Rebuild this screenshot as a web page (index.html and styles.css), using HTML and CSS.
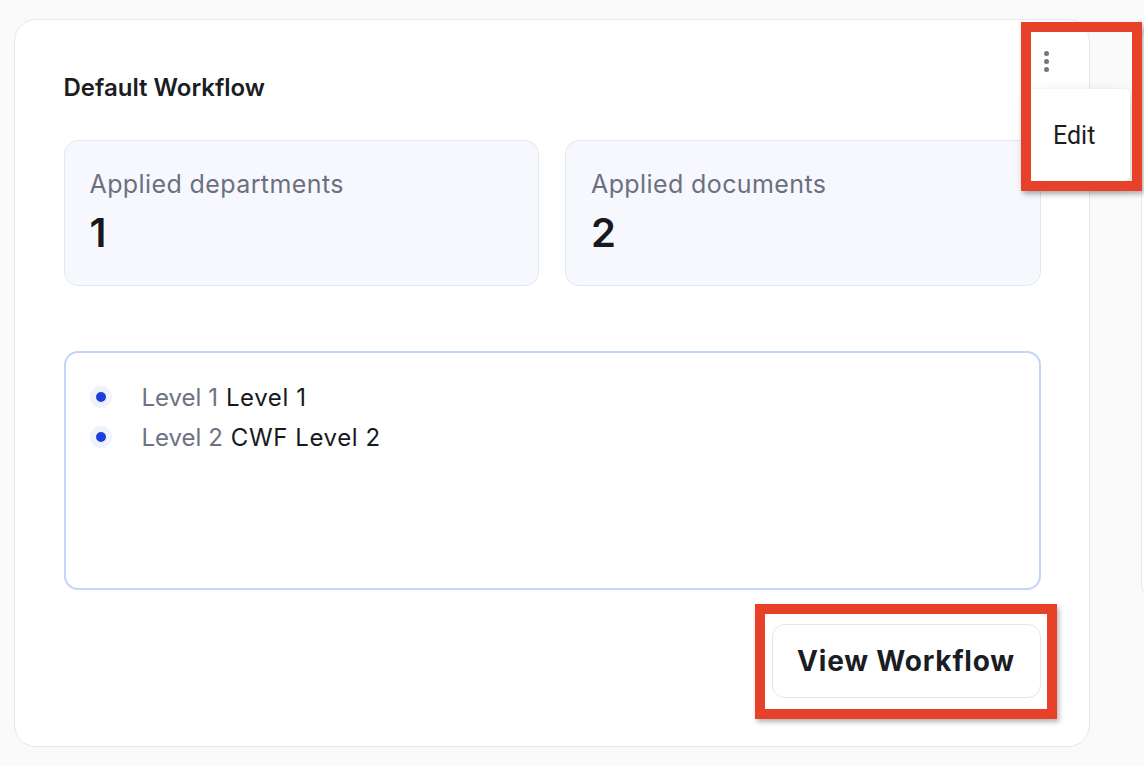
FILE: index.html
```html
<!DOCTYPE html>
<html lang="en">
<head>
    <meta charset="UTF-8">
    <meta name="viewport" content="width=device-width, initial-scale=1.0">
    <title>Workflows</title>
    <link rel="stylesheet" href="styles.css">
</head>
<body>
    <div class="board">
        <div class="card">
            <h2 class="card-title">Default Workflow</h2>

            <button class="kebab" aria-label="More">
                <span></span><span></span><span></span>
            </button>
            <div class="menu">
                <div class="menu-item">Edit</div>
            </div>

            <div class="stats">
                <div class="stat">
                    <div class="stat-label">Applied departments</div>
                    <div class="stat-value">1</div>
                </div>
                <div class="stat">
                    <div class="stat-label">Applied documents</div>
                    <div class="stat-value">2</div>
                </div>
            </div>

            <ul class="levels">
                <li class="level">
                    <span class="level-dot"></span>
                    <span class="level-no">Level 1</span>
                    <span class="level-name">Level 1</span>
                </li>
                <li class="level">
                    <span class="level-dot"></span>
                    <span class="level-no">Level 2</span>
                    <span class="level-name">CWF Level 2</span>
                </li>
            </ul>

            <div class="card-footer">
                <button class="btn-outline">View Workflow</button>
            </div>
        </div>

        <div class="card card-short"></div>
    </div>

    <!-- highlight frames -->
    <div class="mark mark-menu"></div>
    <div class="mark mark-button"></div>
</body>
</html>
```

FILE: styles.css
```css
body {
    margin: 0;
    background: #fafafa;
    font-family: Inter, "Noto Sans", sans-serif;
    color: #1a1d23;
    height: 766px;
    overflow: hidden;
}
.board {
    display: flex;
    gap: 51px;
    padding: 19px 0 0 14px;
    overflow: hidden;
}
.card {
    position: relative;
    flex: 0 0 1076px;
    height: 728px;
    box-sizing: border-box;
    padding: 50.5px 48.5px 48.5px;
    background: #fff;
    border: 1.5px solid #e7e7ef;
    border-radius: 22px;
}
.card-short {
    flex: 0 0 400px;
    height: 586px;
}
.card-title {
    margin: 0;
    font-size: 24px;
    line-height: 1.4;
    font-weight: 600;
    color: #1a1d23;
}

/* menu trigger + dropdown */
.kebab {
    position: absolute;
    top: 31px;
    right: 37px;
    width: 12px;
    height: 21px;
    padding: 0;
    border: 0;
    background: none;
    display: flex;
    flex-direction: column;
    align-items: center;
    justify-content: space-between;
}
.kebab span {
    width: 5px;
    height: 5px;
    border-radius: 50%;
    background: #75767c;
}
.menu {
    position: absolute;
    top: 69px;
    left: 1012px;
    width: 103px;
    height: 92px;
    background: #fff;
    border-radius: 5px;
    box-shadow: 0 6px 16px rgba(0, 0, 0, 0.14), 0 2px 5px rgba(0, 0, 0, 0.08);
    display: flex;
    align-items: center;
}
.menu-item {
    padding-left: 26px;
    font-family: Roboto, sans-serif;
    font-size: 25px;
    color: #1d1d1f;
}

/* stat tiles */
.stats {
    display: grid;
    grid-template-columns: 1fr 1fr;
    gap: 26px;
    margin-top: 36px;
}
.stat {
    height: 146px;
    box-sizing: border-box;
    padding: 26px 25px;
    background: #f7f8fe;
    border: 1.5px solid #e2e7f6;
    border-radius: 14px;
}
.stat-label {
    font-size: 25px;
    line-height: 1.4;
    color: #6b7080;
    letter-spacing: 0.4px;
}
.stat-value {
    margin-top: 7px;
    font-size: 40px;
    line-height: 1.2;
    font-weight: 600;
    color: #17191e;
}

/* level list */
.levels {
    list-style: none;
    margin: 65px 0 0;
    height: 239px;
    box-sizing: border-box;
    padding: 24px 24px;
    border: 2px solid #c4d5fb;
    border-radius: 14px;
    font-size: 24px;
}
.level {
    display: flex;
    align-items: center;
    height: 40px;
}
.level-dot {
    width: 10px;
    height: 10px;
    border-radius: 50%;
    background: #1c3fdc;
    border: 6px solid #eef2fd;
    margin-right: 30px;
}
.level-no {
    color: #6e7282;
    margin-right: 8px;
}
.level-name {
    color: #17191e;
    letter-spacing: 0.6px;
}

.card-footer {
    display: flex;
    justify-content: flex-end;
    margin-top: 34px;
}
.btn-outline {
    width: 269px;
    height: 74px;
    background: #fff;
    border: 1.5px solid #e5e5ee;
    border-radius: 13px;
    font-family: Inter, sans-serif;
    font-size: 28px;
    font-weight: 700;
    letter-spacing: 0.8px;
    color: #1a1d23;
}

/* red highlight frames */
.mark {
    position: absolute;
    box-sizing: border-box;
    border: 10px solid #e8412a;
    box-shadow: 2px 3px 5px rgba(0, 0, 0, 0.3);
}
.mark-menu {
    left: 1021px;
    top: 22px;
    width: 121px;
    height: 169px;
}
.mark-button {
    left: 755px;
    top: 604px;
    width: 302px;
    height: 115px;
}
```
